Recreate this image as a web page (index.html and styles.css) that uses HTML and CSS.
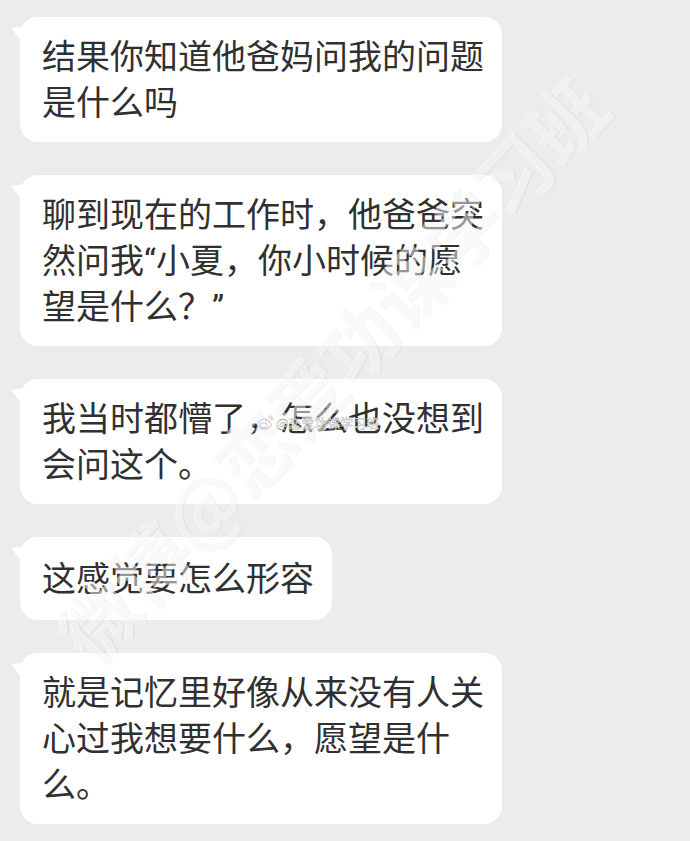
FILE: index.html
```html
<!DOCTYPE html>
<html>
<head>
	<title>聊天记录</title>
	<meta charset="UTF-8">
	<link rel="stylesheet" href="styles.css">
</head>
<body>
	<div id="chat">
		<div class="msg">结果你知道他爸妈问我的问题<br>是什么吗</div>
		<div class="msg">聊到现在的工作时，他爸爸突<br>然问我“小夏，你小时候的愿<br>望是什么？”</div>
		<div class="msg">我当时都懵了，怎么也没想到<br>会问这个。</div>
		<div class="msg short">这感觉要怎么形容</div>
		<div class="msg">就是记忆里好像从来没有人关<br>心过我想要什么，愿望是什<br>么。</div>
	</div>

	<!-- 水印 -->
	<div class="markBig">微博@恋爱功课学习班</div>
	<div class="markSmall">
		<svg width="18" height="15" viewBox="0 0 18 15">
			<path d="M7.5 4.2C4.4 5.3 1.6 7.6 1.6 9.8c0 2.4 3 4.2 6.6 4.2 3.9 0 7-2 7-4.4 0-1.6-1.5-2-2.3-2.2.6-1.5.2-2.6-1.8-2.2-1 .2-1.7.6-1.7.6s.4-1.4-.2-2c-.5-.3-1.1 0-1.7.4z" fill="none" stroke="#bbb" stroke-width="1"/>
			<ellipse cx="7.6" cy="10.2" rx="3.6" ry="2.4" fill="none" stroke="#bbb" stroke-width="0.9"/>
			<path d="M12.5 2.2c1.8 0 3.3 1.4 3.3 3.2M12.6 .8c2.6 0 4.7 2 4.7 4.6" fill="none" stroke="#bbb" stroke-width="0.9"/>
		</svg>
		<span>@恋爱功课学习班</span>
	</div>
</body>
</html>
```

FILE: styles.css
```css
*{
	margin: 0;
	padding: 0;
}
body{
	width: 690px;
	height: 841px;
	background-color: #ececec;
	font-family: Roboto, "Noto Sans CJK SC", sans-serif;
	color: #303030;
	position: relative;
	overflow: hidden;
}
#chat{
	display: flex;
	flex-direction: column;
	align-items: flex-start;
	gap: 33px;
	padding: 17px 0 0 20px;
}
#chat .msg{
	position: relative;
	background: #fff;
	border-radius: 18px;
	padding: 17px 18px 16px 22px;
	font-size: 34px;
	line-height: 46px;
	white-space: nowrap;
}
#chat .msg.short{
	padding-top: 19px;
	padding-bottom: 18px;
}
#chat .msg::before{
	content: "";
	position: absolute;
	left: -9px;
	top: 9px;
	width: 14px;
	height: 20px;
	background: #fff;
	clip-path: polygon(0 10%, 100% 0, 100% 100%);
}
.markBig{
	position: absolute;
	left: -60px;
	top: 330px;
	width: 780px;
	text-align: center;
	font-family: "Noto Sans CJK SC", sans-serif;
	font-weight: bold;
	font-size: 76px;
	line-height: 76px;
	color: rgba(255, 255, 255, 0.5);
	text-shadow: 1px 1px 1px rgba(0, 0, 0, 0.05);
	transform: rotate(-47deg);
	pointer-events: none;
}
.markSmall{
	position: absolute;
	left: 256px;
	top: 413px;
	display: flex;
	align-items: center;
	gap: 2px;
	pointer-events: none;
}
.markSmall span{
	font-family: "Noto Sans CJK SC", sans-serif;
	font-size: 13px;
	color: rgba(255, 255, 255, 0.85);
	-webkit-text-stroke: 0.4px #aaa;
}
```
